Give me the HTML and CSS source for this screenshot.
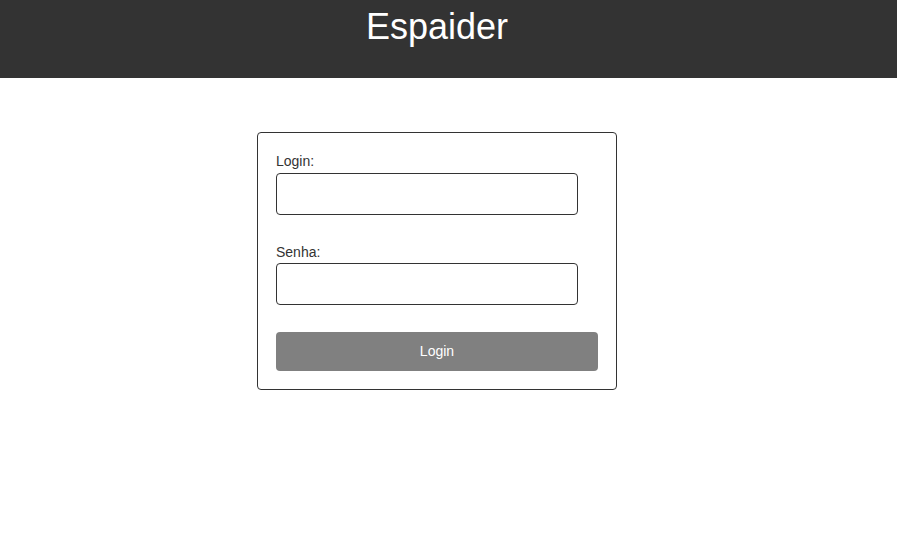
FILE: index.html
```html
<!DOCTYPE html>
<html lang="pt">
<head>
<meta charset="utf-8">
<title>Espaider</title>
<link rel="stylesheet" href="styles.css">
</head>
<body>
<header class="topbar">
  <h1 class="title">Espaider</h1>
</header>
<main class="page">
  <form class="card">
    <label class="label" for="login">Login:</label>
    <input class="field" id="login" type="text">
    <label class="label label-second" for="senha">Senha:</label>
    <input class="field" id="senha" type="password">
    <button class="btn" type="button">Login</button>
  </form>
</main>
</body>
</html>
```
FILE: styles.css
```css
html, body {
  margin: 0;
  padding: 0;
  background: #ffffff;
  font-family: "Liberation Sans", Arial, sans-serif;
}
.topbar {
  height: 78px;
  box-sizing: border-box;
  padding-top: 6px;
  background: #333333;
}
.title {
  width: 874px;
  margin: 0;
  text-align: center;
  color: #ffffff;
  font-size: 36px;
  font-weight: normal;
  line-height: 41px;
}
.page {
  width: 874px;
  display: flex;
  justify-content: center;
  padding-top: 54px;
}
.card {
  width: 360px;
  box-sizing: border-box;
  border: 1px solid #333333;
  border-radius: 4px;
  padding: 20px 18px 18px;
  display: flex;
  flex-direction: column;
  align-items: flex-start;
}
.label {
  display: block;
  font-size: 14px;
  line-height: 16px;
  color: #333333;
  margin-bottom: 4px;
}
.label-second {
  margin-top: 29px;
  margin-bottom: 3px;
}
.field {
  width: 302px;
  height: 42px;
  box-sizing: border-box;
  margin: 0;
  border: 1px solid #333333;
  border-radius: 4px;
  background: #ffffff;
  padding: 0 8px;
  font-family: inherit;
  font-size: 14px;
}
.btn {
  margin-top: 27px;
  width: 322px;
  height: 39px;
  border: none;
  border-radius: 4px;
  background: #808080;
  color: #ffffff;
  font-family: inherit;
  font-size: 14px;
  line-height: 16px;
  padding: 0 0 2px;
  cursor: pointer;
}
```
